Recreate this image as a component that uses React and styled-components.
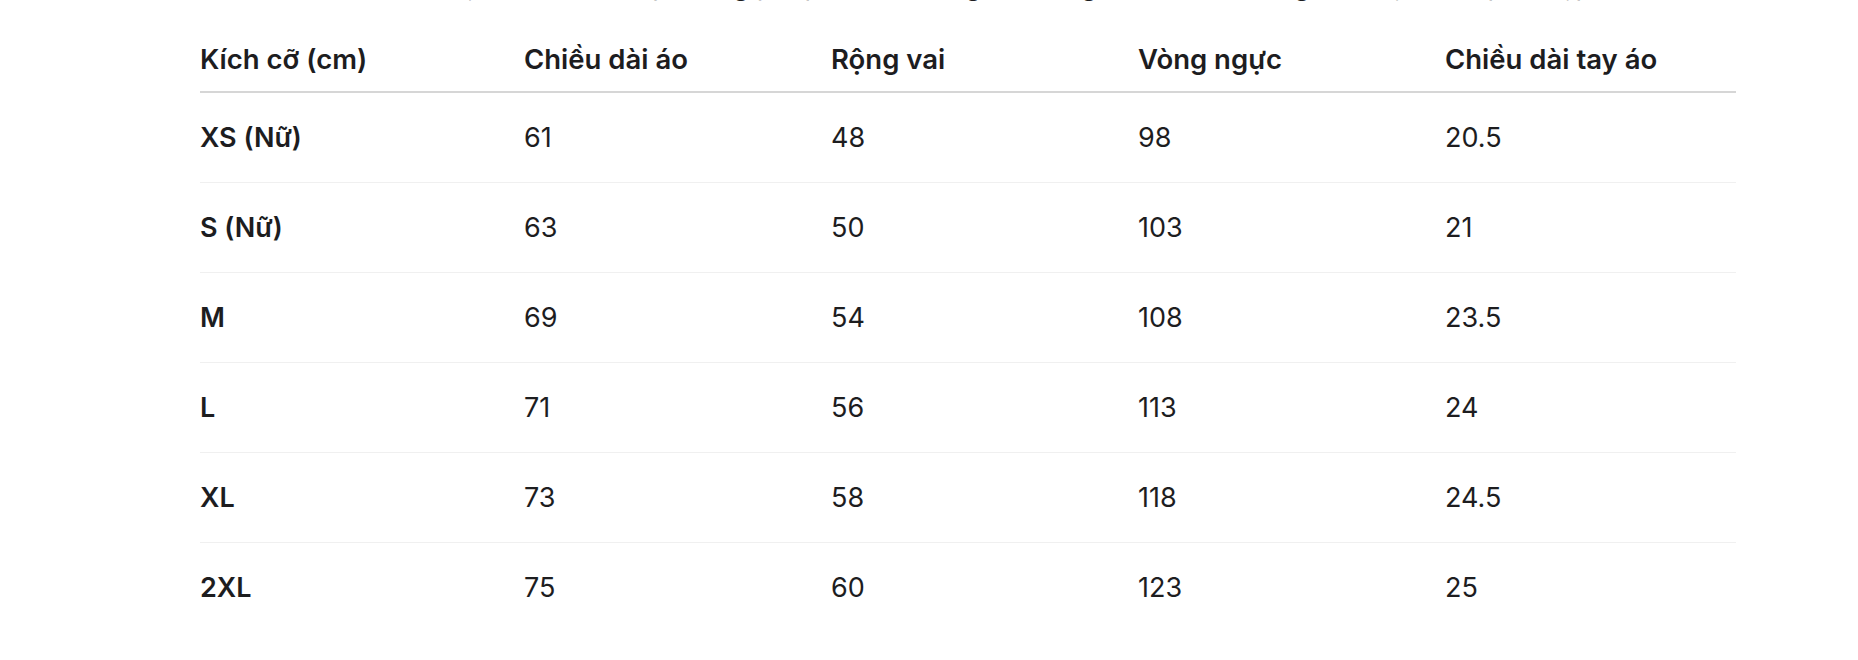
import React from 'react';
import styled, { createGlobalStyle } from 'styled-components';

const GlobalStyle = createGlobalStyle`
  html, body {
    margin: 0;
    padding: 0;
    background: #fff;
  }
  body {
    font-family: Inter, "Noto Sans", sans-serif;
    color: #1d1d1f;
    overflow: hidden;
  }
`;

const headers = ['Kích cỡ (cm)', 'Chiều dài áo', 'Rộng vai', 'Vòng ngực', 'Chiều dài tay áo'];

const rows = [
  ['XS (Nữ)', '61', '48', '98', '20.5'],
  ['S (Nữ)', '63', '50', '103', '21'],
  ['M', '69', '54', '108', '23.5'],
  ['L', '71', '56', '113', '24'],
  ['XL', '73', '58', '118', '24.5'],
  ['2XL', '75', '60', '123', '25'],
];

const colWidths = [324, 307, 307, 307, 291];

const SizeGuide = () => (
  <Page>
    <GlobalStyle />
    <Intro>
      Số đo có thể chênh lệch 1–2 cm do phương pháp đo thủ công, vui lòng tham khảo bảng để chọn size phù hợp.
    </Intro>
    <Table>
      <colgroup>
        {colWidths.map((w, i) => (
          <col key={i} style={{ width: w }} />
        ))}
      </colgroup>
      <thead>
        <tr>
          {headers.map((h) => (
            <HeadCell key={h}>{h}</HeadCell>
          ))}
        </tr>
      </thead>
      <tbody>
        {rows.map((r) => (
          <Row key={r[0]}>
            {r.map((v, i) => (
              <Cell key={i} $label={i === 0}>
                {v}
              </Cell>
            ))}
          </Row>
        ))}
      </tbody>
    </Table>
  </Page>
);

const Page = styled.div`
  padding: 0 122px 0 200px;
`;

const Intro = styled.p`
  margin: -31px 0 0;
  font-size: 27px;
  line-height: 34px;
  white-space: nowrap;
  overflow: hidden;
`;

const Table = styled.table`
  width: 1536px;
  margin-top: 23px;
  border-collapse: collapse;
  table-layout: fixed;
`;

const HeadCell = styled.th`
  text-align: left;
  font-size: 27.5px;
  font-weight: 600;
  line-height: 34px;
  padding: 16px 0 15px;
  border-bottom: 2px solid #d6d6d6;
`;

const Row = styled.tr`
  border-bottom: 1px solid #f0f0f0;

  &:last-child {
    border-bottom: none;
  }
`;

const Cell = styled.td`
  height: 89px;
  padding: 0;
  font-size: 27px;
  line-height: 34px;
  font-weight: ${(p) => (p.$label ? 600 : 400)};
  vertical-align: middle;
`;

export default SizeGuide;
